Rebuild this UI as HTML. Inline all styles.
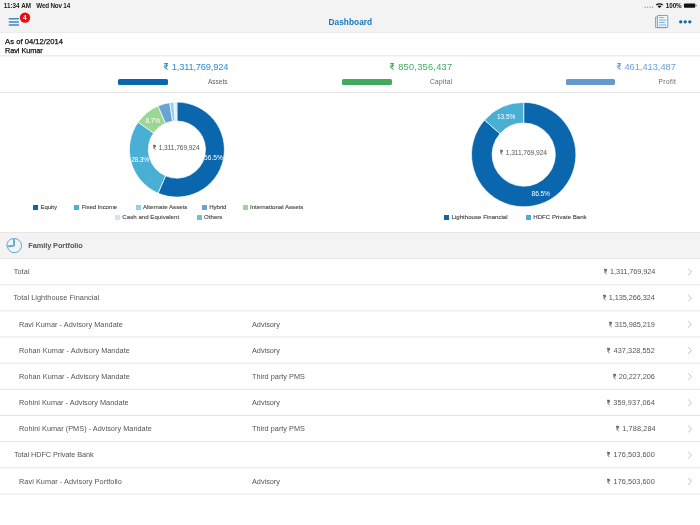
<!DOCTYPE html>
<html><head><meta charset="utf-8"><style>
html,body{margin:0;padding:0;}
body{width:700px;height:525px;overflow:hidden;position:relative;background:#fff;font-family:"Liberation Sans", sans-serif;}
.t{position:absolute;white-space:nowrap;}
</style></head><body>
<div style="position:absolute;left:0;top:0;width:700px;height:33px;background:#f3f3f3"></div><div style="position:absolute;left:118.20px;top:78.7px;width:49.5px;height:6.4px;border-radius:1.6px;background:#0a67ae"></div><div style="position:absolute;left:342.00px;top:78.7px;width:49.5px;height:6.4px;border-radius:1.6px;background:#42aa5e"></div><div style="position:absolute;left:565.80px;top:78.7px;width:49.5px;height:6.4px;border-radius:1.6px;background:#6699cc"></div><div style="position:absolute;left:33.0px;top:204.90px;width:5px;height:5px;background:#0a67ad"></div><div style="position:absolute;left:74.3px;top:204.90px;width:5px;height:5px;background:#4aafd5"></div><div style="position:absolute;left:136.0px;top:204.90px;width:5px;height:5px;background:#8ed2f0"></div><div style="position:absolute;left:202.1px;top:204.90px;width:5px;height:5px;background:#6aa3d2"></div><div style="position:absolute;left:243.1px;top:204.90px;width:5px;height:5px;background:#9ad793"></div><div style="position:absolute;left:115.0px;top:215.00px;width:5px;height:5px;background:#c6e8f7"></div><div style="position:absolute;left:197.0px;top:215.00px;width:5px;height:5px;background:#6cc5c3"></div><div style="position:absolute;left:444.1px;top:214.60px;width:5px;height:5px;background:#0a67ad"></div><div style="position:absolute;left:526.4px;top:214.60px;width:5px;height:5px;background:#4aafd5"></div><div style="position:absolute;left:0;top:232px;width:700px;height:26.5px;background:#f3f3f3"></div>
<svg style="position:absolute;left:0;top:0" width="700" height="525" viewBox="0 0 700 525"><rect x="0" y="32.00" width="700" height="1" fill="#ececec"/><rect x="8.7" y="17.95" width="10.3" height="1.5" rx="0.4" fill="#3a89c2"/><rect x="8.7" y="21.15" width="10.3" height="1.5" rx="0.4" fill="#3a89c2"/><rect x="8.7" y="24.25" width="10.3" height="1.5" rx="0.4" fill="#3a89c2"/><circle cx="25" cy="17.6" r="5.2" fill="#f00a0a"/><circle cx="645.20" cy="7.3" r="0.7" fill="#9a9a9a"/><circle cx="647.70" cy="7.3" r="0.7" fill="#9a9a9a"/><circle cx="650.20" cy="7.3" r="0.7" fill="#9a9a9a"/><circle cx="652.70" cy="7.3" r="0.7" fill="#9a9a9a"/><path d="M655.8 4.6 A6 6 0 0 1 663.2 4.6 L662.2 5.6 A4.6 4.6 0 0 0 656.8 5.6 Z M657.5 6.2 A3.4 3.4 0 0 1 661.5 6.2 L659.5 8 Z" fill="#111"/><rect x="683.9" y="3.4" width="11.4" height="4.4" rx="1" fill="#111"/><rect x="695.8" y="4.8" width="0.9" height="1.6" fill="#777"/><path d="M657.2 17 H655.6 V27.6 H665.9 V26.8" fill="none" stroke="#5b9fd2" stroke-width="0.9"/><rect x="657.4" y="15.5" width="10.4" height="12.1" rx="0.6" fill="none" stroke="#5b9fd2" stroke-width="0.9"/><line x1="659.1" y1="17.6" x2="663.7" y2="17.6" stroke="#5b9fd2" stroke-width="0.8"/><line x1="659.1" y1="20.1" x2="666.2" y2="20.1" stroke="#5b9fd2" stroke-width="0.8"/><line x1="659.1" y1="22.5" x2="664.7" y2="22.5" stroke="#5b9fd2" stroke-width="0.8"/><line x1="659.1" y1="25.0" x2="666.2" y2="25.0" stroke="#5b9fd2" stroke-width="0.8"/><circle cx="680.7" cy="21.8" r="1.65" fill="#0c68ad"/><circle cx="685.2" cy="21.8" r="1.65" fill="#0c68ad"/><circle cx="689.8" cy="21.8" r="1.65" fill="#0c68ad"/><rect x="0" y="55.30" width="700" height="1" fill="#e5e5e5"/><rect x="0" y="92.00" width="700" height="1" fill="#e5e5e5"/><path d="M176.900 102.100 A47.5 47.5 0 1 1 158.035 193.193 L165.542 175.848 A28.6 28.6 0 1 0 176.900 121.000 Z" fill="#0a67ad" stroke="#fff" stroke-width="0.7" stroke-linejoin="round"/><path d="M158.035 193.193 A47.5 47.5 0 0 1 138.124 122.165 L153.553 133.081 A28.6 28.6 0 0 0 165.542 175.848 Z" fill="#4aafd5" stroke="#fff" stroke-width="0.7" stroke-linejoin="round"/><path d="M138.124 122.165 A47.5 47.5 0 0 1 158.035 106.007 L165.542 123.352 A28.6 28.6 0 0 0 153.553 133.081 Z" fill="#9ad793" stroke="#fff" stroke-width="0.7" stroke-linejoin="round"/><path d="M158.035 106.007 A47.5 47.5 0 0 1 169.764 102.639 L172.604 121.325 A28.6 28.6 0 0 0 165.542 123.352 Z" fill="#6aa3d2" stroke="#fff" stroke-width="0.7" stroke-linejoin="round"/><path d="M169.764 102.639 A47.5 47.5 0 0 1 173.917 102.194 L175.104 121.056 A28.6 28.6 0 0 0 172.604 121.325 Z" fill="#8ed2f0" stroke="#fff" stroke-width="0.7" stroke-linejoin="round"/><path d="M173.917 102.194 A47.5 47.5 0 0 1 176.005 102.108 L176.361 121.005 A28.6 28.6 0 0 0 175.104 121.056 Z" fill="#c6e8f7" stroke="#fff" stroke-width="0.7" stroke-linejoin="round"/><path d="M176.005 102.108 A47.5 47.5 0 0 1 176.900 102.100 L176.900 121.000 A28.6 28.6 0 0 0 176.361 121.005 Z" fill="#6cc5c3" stroke="#fff" stroke-width="0.7" stroke-linejoin="round"/><path d="M523.700 102.400 A52.2 52.2 0 1 1 484.544 120.080 L499.996 133.703 A31.6 31.6 0 1 0 523.700 123.000 Z" fill="#0a67ad" stroke="#fff" stroke-width="0.7" stroke-linejoin="round"/><path d="M484.544 120.080 A52.2 52.2 0 0 1 523.700 102.400 L523.700 123.000 A31.6 31.6 0 0 0 499.996 133.703 Z" fill="#4aafd5" stroke="#fff" stroke-width="0.7" stroke-linejoin="round"/><rect x="0" y="232.00" width="700" height="1" fill="#e5e5e5"/><path d="M14.4 238.5 A7.1 7.1 0 1 1 7.4 246.8" fill="none" stroke="#5aa9d6" stroke-width="1"/><path d="M14.4 238.5 V246.1 L7.4 246.8" fill="none" stroke="#5aa9d6" stroke-width="1"/><path d="M13.6 245.3 V238.5 A7.1 7.1 0 0 0 6.8 246.1 Z" fill="none" stroke="#5aa9d6" stroke-width="1"/><rect x="0" y="258.00" width="700" height="1" fill="#e5e5e5"/><path d="M688.2 268.70 L691.5 272.00 L688.2 275.30" fill="none" stroke="#bcbcc0" stroke-width="0.95"/><rect x="0" y="284.17" width="700" height="1" fill="#e5e5e5"/><path d="M688.2 294.87 L691.5 298.17 L688.2 301.47" fill="none" stroke="#bcbcc0" stroke-width="0.95"/><rect x="0" y="310.34" width="700" height="1" fill="#e5e5e5"/><path d="M688.2 321.04 L691.5 324.34 L688.2 327.64" fill="none" stroke="#bcbcc0" stroke-width="0.95"/><rect x="0" y="336.51" width="700" height="1" fill="#e5e5e5"/><path d="M688.2 347.21 L691.5 350.51 L688.2 353.81" fill="none" stroke="#bcbcc0" stroke-width="0.95"/><rect x="0" y="362.68" width="700" height="1" fill="#e5e5e5"/><path d="M688.2 373.38 L691.5 376.68 L688.2 379.98" fill="none" stroke="#bcbcc0" stroke-width="0.95"/><rect x="0" y="388.85" width="700" height="1" fill="#e5e5e5"/><path d="M688.2 399.55 L691.5 402.85 L688.2 406.15" fill="none" stroke="#bcbcc0" stroke-width="0.95"/><rect x="0" y="415.02" width="700" height="1" fill="#e5e5e5"/><path d="M688.2 425.72 L691.5 429.02 L688.2 432.32" fill="none" stroke="#bcbcc0" stroke-width="0.95"/><rect x="0" y="441.19" width="700" height="1" fill="#e5e5e5"/><path d="M688.2 451.89 L691.5 455.19 L688.2 458.49" fill="none" stroke="#bcbcc0" stroke-width="0.95"/><rect x="0" y="467.36" width="700" height="1" fill="#e5e5e5"/><path d="M688.2 478.06 L691.5 481.36 L688.2 484.66" fill="none" stroke="#bcbcc0" stroke-width="0.95"/><rect x="0" y="493.53" width="700" height="1" fill="#e5e5e5"/></svg>
<div style="position:absolute;left:0;top:0;width:700px;height:525px;will-change:transform"><div class="t" style="left:3.80px;top:3px;font-size:6.3px;line-height:6.3px;color:#222;font-weight:bold;letter-spacing:0.014px;">11:34 AM</div><div class="t" style="left:36.30px;top:3px;font-size:6.3px;line-height:6.3px;color:#222;font-weight:bold;letter-spacing:-0.189px;">Wed Nov 14</div><div class="t" style="left:665.70px;top:3px;font-size:6.3px;line-height:6.3px;color:#111;font-weight:bold;letter-spacing:-0.033px;">100%</div><div class="t" style="left:328.50px;top:18px;font-size:8.3px;line-height:8.3px;color:#1877bc;font-weight:bold;letter-spacing:0.038px;">Dashboard</div><div class="t" style="left:5.10px;top:38px;font-size:7.6px;line-height:7.6px;color:#111;font-weight:normal;letter-spacing:0.033px;-webkit-text-stroke:0.25px #111;">As of 04/12/2014</div><div class="t" style="left:5.10px;top:47px;font-size:7.3px;line-height:7.3px;color:#111;font-weight:normal;letter-spacing:-0.067px;-webkit-text-stroke:0.25px #111;">Ravi Kumar</div><div class="t" style="left:164.00px;top:63px;font-size:9.3px;line-height:9.3px;color:#2f8cc9;font-weight:normal;letter-spacing:-0.183px;"><svg width="4.22" height="6.80" viewBox="0 0 62 100" style="display:inline-block;vertical-align:0;margin-right:3.60px;overflow:visible"><path d="M3 7 H59 M3 33 H59 M3 7 H20 C50 7 50 57 20 59 H9 L52 97" fill="none" stroke="#2f8cc9" stroke-width="16"/></svg>1,311,769,924</div><div class="t" style="left:208.00px;top:79px;font-size:6.6px;line-height:6.6px;color:#666;font-weight:normal;letter-spacing:-0.040px;">Assets</div><div class="t" style="left:390.40px;top:63px;font-size:9.3px;line-height:9.3px;color:#43aa62;font-weight:normal;letter-spacing:0.220px;"><svg width="4.22" height="6.80" viewBox="0 0 62 100" style="display:inline-block;vertical-align:0;margin-right:3.60px;overflow:visible"><path d="M3 7 H59 M3 33 H59 M3 7 H20 C50 7 50 57 20 59 H9 L52 97" fill="none" stroke="#43aa62" stroke-width="16"/></svg>850,356,437</div><div class="t" style="left:430.00px;top:79px;font-size:6.6px;line-height:6.6px;color:#666;font-weight:normal;letter-spacing:0.267px;">Capital</div><div class="t" style="left:616.60px;top:63px;font-size:9.3px;line-height:9.3px;color:#6d9fd5;font-weight:normal;letter-spacing:-0.020px;"><svg width="4.22" height="6.80" viewBox="0 0 62 100" style="display:inline-block;vertical-align:0;margin-right:3.60px;overflow:visible"><path d="M3 7 H59 M3 33 H59 M3 7 H20 C50 7 50 57 20 59 H9 L52 97" fill="none" stroke="#6d9fd5" stroke-width="16"/></svg>461,413,487</div><div class="t" style="left:658.60px;top:79px;font-size:6.6px;line-height:6.6px;color:#666;font-weight:normal;letter-spacing:0.360px;">Profit</div><div class="t" style="left:153.10px;top:145px;font-size:6.7px;line-height:6.7px;color:#555;font-weight:normal;letter-spacing:-0.108px;"><svg width="3.04" height="4.90" viewBox="0 0 62 100" style="display:inline-block;vertical-align:0;margin-right:2.60px;overflow:visible"><path d="M3 7 H59 M3 33 H59 M3 7 H20 C50 7 50 57 20 59 H9 L52 97" fill="none" stroke="#555" stroke-width="16"/></svg>1,311,769,924</div><div class="t" style="left:500.20px;top:150px;font-size:6.7px;line-height:6.7px;color:#555;font-weight:normal;letter-spacing:-0.092px;"><svg width="3.04" height="4.90" viewBox="0 0 62 100" style="display:inline-block;vertical-align:0;margin-right:2.60px;overflow:visible"><path d="M3 7 H59 M3 33 H59 M3 7 H20 C50 7 50 57 20 59 H9 L52 97" fill="none" stroke="#555" stroke-width="16"/></svg>1,311,769,924</div><div class="t" style="left:204.10px;top:155px;font-size:6.6px;line-height:6.6px;color:#fff;font-weight:normal;letter-spacing:0.025px;">56.5%</div><div class="t" style="left:131.20px;top:157px;font-size:6.6px;line-height:6.6px;color:#fff;font-weight:normal;letter-spacing:-0.175px;">28.3%</div><div class="t" style="left:145.40px;top:118px;font-size:6.6px;line-height:6.6px;color:#fff;font-weight:normal;letter-spacing:-0.100px;">8.7%</div><div class="t" style="left:496.90px;top:114px;font-size:6.6px;line-height:6.6px;color:#fff;font-weight:normal;letter-spacing:-0.050px;">13.5%</div><div class="t" style="left:531.60px;top:191px;font-size:6.6px;line-height:6.6px;color:#fff;font-weight:normal;letter-spacing:-0.100px;">86.5%</div><div class="t" style="left:40.50px;top:204px;font-size:6.1px;line-height:6.1px;color:#3a3a3a;font-weight:normal;letter-spacing:-0.100px;-webkit-text-stroke:0.12px #555;">Equity</div><div class="t" style="left:81.70px;top:204px;font-size:6.1px;line-height:6.1px;color:#3a3a3a;font-weight:normal;letter-spacing:-0.091px;-webkit-text-stroke:0.12px #555;">Fixed Income</div><div class="t" style="left:142.90px;top:204px;font-size:6.1px;line-height:6.1px;color:#3a3a3a;font-weight:normal;letter-spacing:0.033px;-webkit-text-stroke:0.12px #555;">Alternate Assets</div><div class="t" style="left:209.30px;top:204px;font-size:6.1px;line-height:6.1px;color:#3a3a3a;font-weight:normal;letter-spacing:-0.080px;-webkit-text-stroke:0.12px #555;">Hybrid</div><div class="t" style="left:250.00px;top:204px;font-size:6.1px;line-height:6.1px;color:#3a3a3a;font-weight:normal;letter-spacing:0.005px;-webkit-text-stroke:0.12px #555;">International Assets</div><div class="t" style="left:122.30px;top:214px;font-size:6.1px;line-height:6.1px;color:#3a3a3a;font-weight:normal;letter-spacing:0.033px;-webkit-text-stroke:0.12px #555;">Cash and Equivalent</div><div class="t" style="left:204.00px;top:214px;font-size:6.1px;line-height:6.1px;color:#3a3a3a;font-weight:normal;letter-spacing:0.020px;-webkit-text-stroke:0.12px #555;">Others</div><div class="t" style="left:451.50px;top:214px;font-size:6.1px;line-height:6.1px;color:#3a3a3a;font-weight:normal;letter-spacing:0.011px;-webkit-text-stroke:0.12px #555;">Lighthouse Financial</div><div class="t" style="left:533.30px;top:214px;font-size:6.1px;line-height:6.1px;color:#3a3a3a;font-weight:normal;letter-spacing:0.013px;-webkit-text-stroke:0.12px #555;">HDFC Private Bank</div><div class="t" style="left:28.30px;top:242px;font-size:7.4px;line-height:7.4px;color:#555;font-weight:bold;letter-spacing:-0.093px;">Family Portfolio</div><div class="t" style="left:13.70px;top:268px;font-size:7.3px;line-height:7.3px;color:#555;font-weight:normal;letter-spacing:0.100px;">Total</div><div class="t" style="left:603.70px;top:268px;font-size:7.3px;line-height:7.3px;color:#555;font-weight:normal;letter-spacing:-0.058px;"><svg width="3.22" height="5.20" viewBox="0 0 62 100" style="display:inline-block;vertical-align:0;margin-right:3.00px;overflow:visible"><path d="M3 7 H59 M3 33 H59 M3 7 H20 C50 7 50 57 20 59 H9 L52 97" fill="none" stroke="#555" stroke-width="16"/></svg>1,311,769,924</div><div class="t" style="left:13.40px;top:294px;font-size:7.3px;line-height:7.3px;color:#555;font-weight:normal;letter-spacing:0.056px;">Total Lighthouse Financial</div><div class="t" style="left:602.60px;top:294px;font-size:7.3px;line-height:7.3px;color:#555;font-weight:normal;letter-spacing:-0.050px;"><svg width="3.22" height="5.20" viewBox="0 0 62 100" style="display:inline-block;vertical-align:0;margin-right:3.00px;overflow:visible"><path d="M3 7 H59 M3 33 H59 M3 7 H20 C50 7 50 57 20 59 H9 L52 97" fill="none" stroke="#555" stroke-width="16"/></svg>1,135,266,324</div><div class="t" style="left:18.90px;top:321px;font-size:7.3px;line-height:7.3px;color:#555;font-weight:normal;letter-spacing:0.050px;">Ravi Kumar - Advisory Mandate</div><div class="t" style="left:252.00px;top:321px;font-size:7.3px;line-height:7.3px;color:#555;font-weight:normal;letter-spacing:-0.014px;">Advisory</div><div class="t" style="left:608.60px;top:321px;font-size:7.3px;line-height:7.3px;color:#555;font-weight:normal;letter-spacing:-0.060px;"><svg width="3.22" height="5.20" viewBox="0 0 62 100" style="display:inline-block;vertical-align:0;margin-right:3.00px;overflow:visible"><path d="M3 7 H59 M3 33 H59 M3 7 H20 C50 7 50 57 20 59 H9 L52 97" fill="none" stroke="#555" stroke-width="16"/></svg>315,985,219</div><div class="t" style="left:19.00px;top:347px;font-size:7.3px;line-height:7.3px;color:#555;font-weight:normal;letter-spacing:0.045px;">Rohan Kumar - Advisory Mandate</div><div class="t" style="left:252.00px;top:347px;font-size:7.3px;line-height:7.3px;color:#555;font-weight:normal;letter-spacing:-0.014px;">Advisory</div><div class="t" style="left:607.40px;top:347px;font-size:7.3px;line-height:7.3px;color:#555;font-weight:normal;letter-spacing:0.060px;"><svg width="3.22" height="5.20" viewBox="0 0 62 100" style="display:inline-block;vertical-align:0;margin-right:3.00px;overflow:visible"><path d="M3 7 H59 M3 33 H59 M3 7 H20 C50 7 50 57 20 59 H9 L52 97" fill="none" stroke="#555" stroke-width="16"/></svg>437,328,552</div><div class="t" style="left:19.00px;top:373px;font-size:7.3px;line-height:7.3px;color:#555;font-weight:normal;letter-spacing:0.045px;">Rohan Kumar - Advisory Mandate</div><div class="t" style="left:252.00px;top:373px;font-size:7.3px;line-height:7.3px;color:#555;font-weight:normal;letter-spacing:0.014px;">Third party PMS</div><div class="t" style="left:612.60px;top:373px;font-size:7.3px;line-height:7.3px;color:#555;font-weight:normal;letter-spacing:-0.067px;"><svg width="3.22" height="5.20" viewBox="0 0 62 100" style="display:inline-block;vertical-align:0;margin-right:3.00px;overflow:visible"><path d="M3 7 H59 M3 33 H59 M3 7 H20 C50 7 50 57 20 59 H9 L52 97" fill="none" stroke="#555" stroke-width="16"/></svg>20,227,206</div><div class="t" style="left:19.00px;top:399px;font-size:7.3px;line-height:7.3px;color:#555;font-weight:normal;letter-spacing:0.030px;">Rohini Kumar - Advisory Mandate</div><div class="t" style="left:252.00px;top:399px;font-size:7.3px;line-height:7.3px;color:#555;font-weight:normal;letter-spacing:-0.014px;">Advisory</div><div class="t" style="left:607.00px;top:399px;font-size:7.3px;line-height:7.3px;color:#555;font-weight:normal;letter-spacing:0.100px;"><svg width="3.22" height="5.20" viewBox="0 0 62 100" style="display:inline-block;vertical-align:0;margin-right:3.00px;overflow:visible"><path d="M3 7 H59 M3 33 H59 M3 7 H20 C50 7 50 57 20 59 H9 L52 97" fill="none" stroke="#555" stroke-width="16"/></svg>359,937,064</div><div class="t" style="left:19.00px;top:425px;font-size:7.3px;line-height:7.3px;color:#555;font-weight:normal;letter-spacing:0.039px;">Rohini Kumar (PMS) - Advisory Mandate</div><div class="t" style="left:252.00px;top:425px;font-size:7.3px;line-height:7.3px;color:#555;font-weight:normal;letter-spacing:0.014px;">Third party PMS</div><div class="t" style="left:616.00px;top:425px;font-size:7.3px;line-height:7.3px;color:#555;font-weight:normal;letter-spacing:0.125px;"><svg width="3.22" height="5.20" viewBox="0 0 62 100" style="display:inline-block;vertical-align:0;margin-right:3.00px;overflow:visible"><path d="M3 7 H59 M3 33 H59 M3 7 H20 C50 7 50 57 20 59 H9 L52 97" fill="none" stroke="#555" stroke-width="16"/></svg>1,788,284</div><div class="t" style="left:13.90px;top:451px;font-size:7.3px;line-height:7.3px;color:#555;font-weight:normal;letter-spacing:-0.059px;">Total HDFC Private Bank</div><div class="t" style="left:607.40px;top:451px;font-size:7.3px;line-height:7.3px;color:#555;font-weight:normal;letter-spacing:0.060px;"><svg width="3.22" height="5.20" viewBox="0 0 62 100" style="display:inline-block;vertical-align:0;margin-right:3.00px;overflow:visible"><path d="M3 7 H59 M3 33 H59 M3 7 H20 C50 7 50 57 20 59 H9 L52 97" fill="none" stroke="#555" stroke-width="16"/></svg>176,503,600</div><div class="t" style="left:19.00px;top:478px;font-size:7.3px;line-height:7.3px;color:#555;font-weight:normal;letter-spacing:0.063px;">Ravi Kumar - Advisory Portfolio</div><div class="t" style="left:252.00px;top:478px;font-size:7.3px;line-height:7.3px;color:#555;font-weight:normal;letter-spacing:-0.014px;">Advisory</div><div class="t" style="left:607.40px;top:478px;font-size:7.3px;line-height:7.3px;color:#555;font-weight:normal;letter-spacing:0.060px;"><svg width="3.22" height="5.20" viewBox="0 0 62 100" style="display:inline-block;vertical-align:0;margin-right:3.00px;overflow:visible"><path d="M3 7 H59 M3 33 H59 M3 7 H20 C50 7 50 57 20 59 H9 L52 97" fill="none" stroke="#555" stroke-width="16"/></svg>176,503,600</div>
<div class="t" style="left:23px;top:15px;font-size:6.4px;line-height:6.4px;color:#fff;font-weight:bold">4</div></div>
</body></html>
